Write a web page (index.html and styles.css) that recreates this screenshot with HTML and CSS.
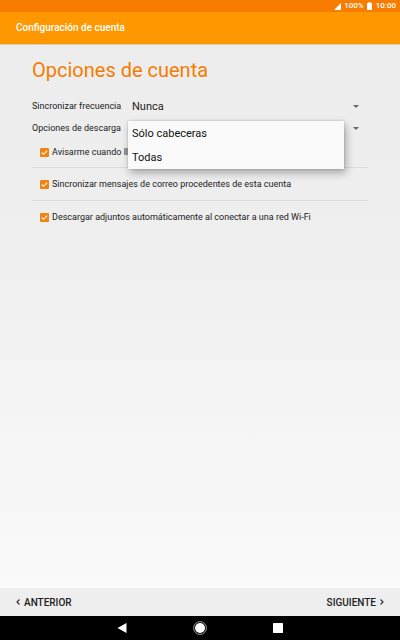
FILE: index.html
```html
<!DOCTYPE html>
<html lang="es">
<head>
    <meta charset="UTF-8">
    <meta name="viewport" content="width=device-width, initial-scale=1.0">
    <title>Configuración de cuenta</title>
    <link rel="stylesheet" href="styles.css">
</head>
<body>
    <div class="status-bar">
        <svg class="signal" viewBox="0 0 7 7"><path d="M7 0v7H0z"/></svg>
        <span>100%</span>
        <svg class="battery" viewBox="0 0 5 8"><path d="M1.5 0h2v1H5v7H0V1h1.500z"/></svg>
        <span class="clock">10:00</span>
    </div>

    <header class="app-bar">Configuración de cuenta</header>

    <main class="content">
        <h1>Opciones de cuenta</h1>

        <form id="options-form">
            <div class="field">
                <label for="frequency">Sincronizar frecuencia</label>
                <div class="spinner">
                    <select id="frequency" name="frequency">
                        <option>Nunca</option>
                    </select>
                    <svg class="arrow" viewBox="0 0 6 3"><path d="M0 0h6L3 3z"/></svg>
                </div>
            </div>

            <div class="field">
                <label for="download">Opciones de descarga</label>
                <div class="spinner">
                    <select id="download" name="download">
                        <option></option>
                    </select>
                    <svg class="arrow" viewBox="0 0 6 3"><path d="M0 0h6L3 3z"/></svg>
                    <div class="popup">
                        <button type="button">Sólo cabeceras</button>
                        <button type="button">Todas</button>
                    </div>
                </div>
            </div>

            <div class="checks">
                <label class="check">
                    <input type="checkbox" name="notify" checked>
                    <span>Avisarme cuando lleguen</span>
                </label>
                <label class="check">
                    <input type="checkbox" name="sync" checked>
                    <span>Sincronizar mensajes de correo procedentes de esta cuenta</span>
                </label>
                <label class="check">
                    <input type="checkbox" name="attachments" checked>
                    <span>Descargar adjuntos automáticamente al conectar a una red Wi-Fi</span>
                </label>
            </div>
        </form>
    </main>

    <footer class="wizard-bar">
        <button type="button">
            <svg class="chevron" viewBox="0 0 4 6"><path d="M3.500 .5L1 3l2.500 2.500"/></svg>
            ANTERIOR
        </button>
        <button type="button" class="next">
            SIGUIENTE
            <svg class="chevron" viewBox="0 0 4 6"><path d="M.5 .5L3 3L.5 5.500"/></svg>
        </button>
    </footer>

    <nav class="nav-bar">
        <button type="button" aria-label="Atrás">
            <svg viewBox="0 0 14 14"><path d="M11.500 2v10L2.500 7z"/></svg>
        </button>
        <button type="button" aria-label="Inicio">
            <svg viewBox="0 0 14 14">
                <circle cx="7" cy="7" r="5"/>
                <circle class="ring" cx="7" cy="7" r="6.400"/>
            </svg>
        </button>
        <button type="button" aria-label="Recientes">
            <svg viewBox="0 0 14 14"><rect x="2" y="2" width="10" height="10" rx=".5"/></svg>
        </button>
    </nav>
</body>
</html>
```

FILE: styles.css
```css
* {
    box-sizing: border-box;
}

body {
    font-family: Roboto, sans-serif;
    font-size: 9px;
    line-height: 14px;
    color: #212121;
    margin: 0;
    min-height: 100vh;
    display: flex;
    flex-direction: column;
}

button,
select {
    font-family: inherit;
    color: inherit;
    border: none;
    background: none;
    margin: 0;
    padding: 0;
    cursor: pointer;
}

svg {
    display: block;
    flex: none;
}

.status-bar {
    display: flex;
    align-items: center;
    justify-content: flex-end;
    gap: 3px;
    height: 12px;
    padding: 0 4px;
    background-color: #f77c00;
    color: #fff;
    font-size: 8px;
    font-weight: 500;
    fill: #fff;
}

.signal {
    width: 7px;
    height: 7px;
}

.battery {
    width: 5px;
    height: 8px;
}

.clock {
    margin-left: 1px;
}

.app-bar {
    display: flex;
    align-items: center;
    height: 32px;
    padding: 0 16px;
    background-color: #ff9800;
    color: #fff;
    font-size: 10px;
    font-weight: 500;
}

.content {
    flex: 1;
    padding: 12px 32px;
    background: linear-gradient(#ededed, #eee 30%, #fafafa);
    box-shadow: inset 0 1px 0 #dccdb8;
}

h1 {
    margin: 0 0 11px;
    font-size: 20px;
    line-height: 28px;
    font-weight: 400;
    color: #f57c00;
}

.field {
    display: flex;
    align-items: center;
    height: 22px;
}

.field label {
    width: 96px;
    white-space: nowrap;
}

.spinner {
    position: relative;
    flex: 1;
    display: flex;
    align-items: center;
    height: 22px;
    padding-right: 9px;
}

select {
    appearance: none;
    flex: 1;
    height: 22px;
    padding-left: 4px;
    font-size: 11px;
}

.arrow {
    width: 6px;
    height: 3px;
    fill: #666;
    pointer-events: none;
}

.popup {
    position: absolute;
    top: 4px;
    left: 0;
    right: 24px;
    z-index: 1;
    background-color: #fafafa;
    box-shadow: 2px 4px 8px rgba(0, 0, 0, 0.3), 0 0 2px rgba(0, 0, 0, 0.2);
}

.popup button {
    display: block;
    width: 100%;
    height: 24px;
    padding-left: 4px;
    font-size: 11px;
    text-align: left;
    color: #111;
}

.checks {
    padding-top: 6px;
}

.check {
    display: flex;
    align-items: center;
    gap: 3px;
    padding: 9px 8px;
    border-bottom: 1px solid #dcdcdc;
}

.check:first-child {
    padding-top: 0;
    padding-bottom: 8px;
}

.check:last-child {
    border-bottom: none;
}

.check input {
    appearance: none;
    flex: none;
    width: 9px;
    height: 9px;
    margin: 0;
    border-radius: 1px;
}

.check input:checked {
    background: #ef8411 url("data:image/svg+xml,%3Csvg xmlns='http://www.w3.org/2000/svg' viewBox='0 0 10 10'%3E%3Cpath d='M2 5l2 2 4-4' fill='none' stroke='white' stroke-width='1.200'/%3E%3C/svg%3E") center / 9px 9px;
}

.wizard-bar {
    display: flex;
    align-items: center;
    justify-content: space-between;
    height: 28px;
    padding: 0 16px;
    background-color: #eee;
}

.wizard-bar button {
    display: flex;
    align-items: center;
    gap: 4px;
    font-size: 10px;
    font-weight: 500;
}

.chevron {
    width: 4px;
    height: 6px;
    fill: none;
    stroke: #333;
    stroke-width: 1.2;
}

.nav-bar {
    display: flex;
    align-items: center;
    justify-content: center;
    gap: 64px;
    height: 24px;
    background-color: #000;
}

.nav-bar svg {
    width: 14px;
    height: 14px;
    fill: #fff;
}

.nav-bar .ring {
    fill: none;
    stroke: #fff;
    stroke-width: .6;
}
```
